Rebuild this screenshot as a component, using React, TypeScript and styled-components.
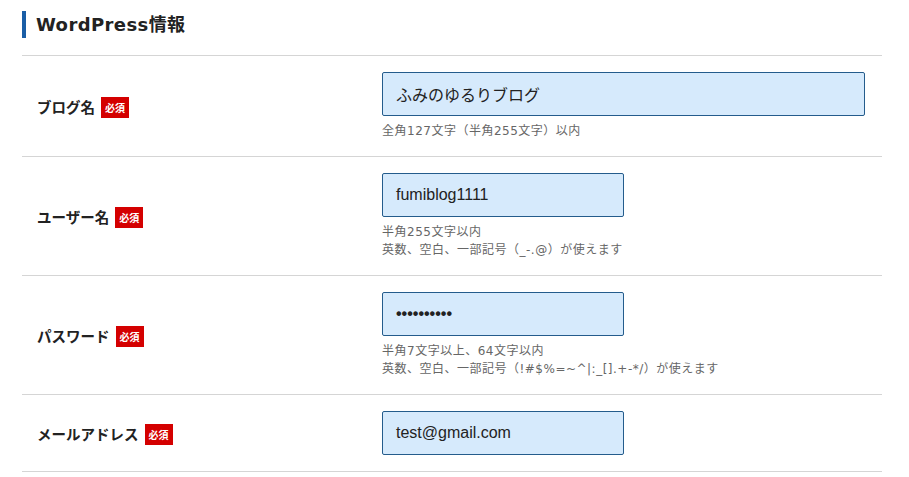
import React from "react";
import styled, { createGlobalStyle } from "styled-components";

const Global = createGlobalStyle`
  html, body { margin: 0; padding: 0; background: #fff; }
  body { font-family: "Noto Sans CJK JP", "Noto Sans", sans-serif; color: #333; }
`;

const Section = styled.section`
  margin: 0 27px 0 22px;
  padding-top: 11px;
`;

const Heading = styled.h2`
  margin: 0;
  border-left: 4px solid #1a5ea6;
  padding-left: 10px;
  height: 27px;
  line-height: 27px;
  font-family: "DejaVu Sans", "Noto Sans CJK JP", sans-serif;
  font-size: 18px;
  font-weight: 700;
  letter-spacing: 0.4px;
  color: #222;
`;

const Table = styled.div`
  margin-top: 17px;
  border-top: 1px solid #d5d5d5;
`;

const Row = styled.div`
  display: grid;
  grid-template-columns: 360px 1fr;
  align-items: center;
  padding: 16px 17px 16px 0;
  border-bottom: 1px solid #d5d5d5;
`;

const Label = styled.div`
  display: flex;
  align-items: center;
  gap: 6px;
  padding-left: 15px;
  font-size: 14.5px;
  font-weight: 700;
  color: #222;
`;

const Badge = styled.span`
  display: inline-block;
  background: #d40000;
  color: #fff;
  font-size: 10px;
  font-weight: 700;
  line-height: 21px;
  padding: 0 4px;
  margin-top: 2px;
`;

const Field = styled.div`
  display: flex;
  flex-direction: column;
`;

const Input = styled.div<{ $wide?: boolean; $dots?: boolean }>`
  box-sizing: border-box;
  width: ${(p) => (p.$wide ? "100%" : "242px")};
  height: 44px;
  display: flex;
  align-items: center;
  padding-left: 13px;
  background: #d6eafc;
  border: 1px solid #245c8c;
  border-radius: 2px;
  font-family: "Liberation Sans", "Noto Sans CJK JP", sans-serif;
  font-size: 16px;
  font-weight: ${(p) => (p.$dots ? 700 : 400)};
  color: #222;
`;

const Hint = styled.div`
  margin-top: 6px;
  font-family: "DejaVu Sans", "Noto Sans CJK JP", sans-serif;
  font-size: 12px;
  line-height: 18px;
  letter-spacing: 0.5px;
  color: #666;
`;

const rows = [
  { label: "ブログ名", value: "ふみのゆるりブログ", wide: true, hints: ["全角127文字（半角255文字）以内"] },
  { label: "ユーザー名", value: "fumiblog1111", hints: ["半角255文字以内", "英数、空白、一部記号（_-.@）が使えます"] },
  { label: "パスワード", value: "••••••••••", dots: true, hints: ["半角7文字以上、64文字以内", "英数、空白、一部記号（!#$%=~^|:_[].+-*/）が使えます"] },
  { label: "メールアドレス", value: "test@gmail.com", hints: [] as string[] },
];

export default function App() {
  return (
    <>
      <Global />
      <Section>
        <Heading>WordPress情報</Heading>
        <Table>
          {rows.map((r) => (
            <Row key={r.label}>
              <Label>
                {r.label}
                <Badge>必須</Badge>
              </Label>
              <Field>
                <Input $wide={r.wide} $dots={r.dots}>{r.value}</Input>
                {r.hints.length > 0 && (
                  <Hint>
                    {r.hints.map((h) => (
                      <div key={h}>{h}</div>
                    ))}
                  </Hint>
                )}
              </Field>
            </Row>
          ))}
        </Table>
      </Section>
    </>
  );
}
